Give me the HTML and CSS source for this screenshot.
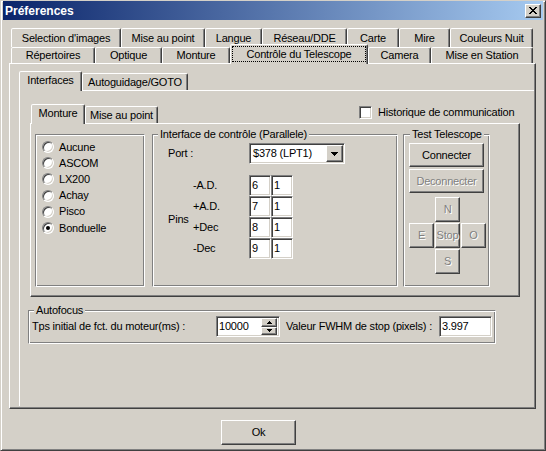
FILE: index.html
```html
<!DOCTYPE html>
<html lang="fr">
<head>
<meta charset="utf-8">
<title>Préferences</title>
<link rel="stylesheet" href="styles.css">
</head>
<body>
<div class="window">
  <div class="titlebar">
    <span class="title">Préferences</span>
    <span class="close">
      <svg width="8" height="7" viewBox="0 0 8 7" shape-rendering="crispEdges"><path fill="#000" d="M0 0h2v1h-2z M6 0h2v1h-2z M1 1h2v1h-2z M5 1h2v1h-2z M2 2h4v1h-4z M3 3h2v1h-2z M2 4h4v1h-4z M1 5h2v1h-2z M5 5h2v1h-2z M0 6h2v1h-2z M6 6h2v1h-2z"/></svg>
    </span>
  </div>
  <div class="client">
    <div class="maintabs">
      <div class="tabrow row1">
        <div class="tab">Selection d'images</div>
        <div class="tab">Mise au point</div>
        <div class="tab">Langue</div>
        <div class="tab">Réseau/DDE</div>
        <div class="tab">Carte</div>
        <div class="tab">Mire</div>
        <div class="tab">Couleurs Nuit</div>
      </div>
      <div class="tabrow row2">
        <div class="tab">Répertoires</div>
        <div class="tab">Optique</div>
        <div class="tab">Monture</div>
        <div class="tab sel"><span class="focus">Contrôle du Telescope</span></div>
        <div class="tab">Camera</div>
        <div class="tab">Mise en Station</div>
      </div>
      <div class="panel mainpanel">
        <div class="subtabs">
          <div class="tabrow subrow">
            <div class="tab sel">Interfaces</div>
            <div class="tab">Autoguidage/GOTO</div>
          </div>
          <div class="subpanel">
            <div class="montop">
              <div class="tabrow mrow">
                <div class="tab sel">Monture</div>
                <div class="tab">Mise au point</div>
              </div>
              <div class="check"><span class="checkbox"></span><span>Historique de communication</span></div>
            </div>
            <div class="panel montpanel">
              <div class="group radios">
                <div class="radio"><span class="rb"></span>Aucune</div>
                <div class="radio"><span class="rb"></span>ASCOM</div>
                <div class="radio"><span class="rb"></span>LX200</div>
                <div class="radio"><span class="rb"></span>Achay</div>
                <div class="radio"><span class="rb"></span>Pisco</div>
                <div class="radio"><span class="rb on"></span>Bonduelle</div>
              </div>
              <div class="group iface">
                <span class="caption">Interface de contrôle (Parallele)</span>
                <div class="portrow">
                  <span class="portlabel">Port :</span>
                  <div class="combo">
                    <span class="combotext">$378 (LPT1)</span>
                    <span class="btn dropbtn"><svg width="7" height="4" viewBox="0 0 7 4" shape-rendering="crispEdges"><path fill="#000" d="M0 0h7v1h-7z M1 1h5v1h-5z M2 2h3v1h-3z M3 3h1v1h-1z"/></svg></span>
                  </div>
                </div>
                <div class="pins">
                  <span class="pinslabel">Pins</span>
                  <span class="pinname">-A.D.</span><span class="edit">6</span><span class="edit">1</span>
                  <span class="pinname">+A.D.</span><span class="edit">7</span><span class="edit">1</span>
                  <span class="pinname">+Dec</span><span class="edit">8</span><span class="edit">1</span>
                  <span class="pinname">-Dec</span><span class="edit">9</span><span class="edit">1</span>
                </div>
              </div>
              <div class="group test">
                <span class="caption">Test Telescope</span>
                <div class="btn wide">Connecter</div>
                <div class="btn wide disabled">Deconnecter</div>
                <div class="pad">
                  <div class="btn disabled dn">N</div>
                  <div class="btn disabled de">E</div>
                  <div class="btn disabled dst">Stop</div>
                  <div class="btn disabled do">O</div>
                  <div class="btn disabled ds">S</div>
                </div>
              </div>
            </div>
            <div class="group autofocus">
              <span class="caption">Autofocus</span>
              <div class="afrow">
                <span class="aflabel1">Tps initial de fct. du moteur(ms) :</span>
                <div class="edit spin">
                  <span class="spintext">10000</span>
                  <span class="spinbtns">
                    <span class="btn sb"><svg width="5" height="3" viewBox="0 0 5 3" shape-rendering="crispEdges"><path fill="#000" d="M2 0h1v1h-1z M1 1h3v1h-3z M0 2h5v1h-5z"/></svg></span>
                    <span class="btn sb"><svg width="5" height="3" viewBox="0 0 5 3" shape-rendering="crispEdges"><path fill="#000" d="M0 0h5v1h-5z M1 1h3v1h-3z M2 2h1v1h-1z"/></svg></span>
                  </span>
                </div>
                <span class="aflabel2">Valeur FWHM de stop (pixels) :</span>
                <div class="edit fwhm">3.997</div>
              </div>
            </div>
          </div>
        </div>
      </div>
    </div>
    <div class="okrow"><div class="btn ok">Ok</div></div>
  </div>
</div>
</body>
</html>
```

FILE: styles.css
```css
* { box-sizing: border-box; }
html, body { margin: 0; padding: 0; }
body {
  width: 546px; height: 451px; overflow: hidden;
  background: #d4d0c8;
  font-family: "Liberation Sans", Arial, sans-serif;
  font-size: 11px; line-height: 13px; color: #000;
  letter-spacing: -0.2px;
}

.window {
  width: 546px; height: 451px;
  display: flex; flex-direction: column;
  background: #d4d0c8;
  border: 1px solid; border-color: #d4d0c8 #404040 #404040 #d4d0c8;
  box-shadow: inset 1px 1px 0 #fff, inset -1px -1px 0 #808080;
  padding: 0 2px 2px 2px;
}

.titlebar {
  flex: none; height: 19px;
  display: flex; align-items: center;
  padding: 0 2px;
  background: linear-gradient(to right, #0a246a, #a6caf0);
}
.title { flex: 1; color: #fff; font-weight: bold; font-size: 12px; letter-spacing: 0; padding-top: 1px; }
.close {
  width: 16px; height: 14px;
  display: flex; align-items: center; justify-content: center;
  padding: 0 1px 1px 0;
  background: #d4d0c8;
  border: 1px solid; border-color: #fff #404040 #404040 #fff;
  box-shadow: inset -1px -1px 0 #808080;
}
.close svg, .btn svg { display: block; }

.client { flex: 1; padding: 8px 0 0 6px; }
.maintabs { width: 527px; }

/* tabs */
.tabrow { display: flex; align-items: flex-end; }
.tab {
  flex: none;
  display: flex; align-items: center; justify-content: center;
  white-space: nowrap;
  background: #d4d0c8;
  border-style: solid; border-width: 1px 1px 0 1px;
  border-color: #fff #404040 transparent #fff;
  border-radius: 2px 2px 0 0;
  box-shadow: inset -1px 0 0 #808080;
}
.tab.sel { position: relative; z-index: 2; margin-bottom: -1px; align-items: flex-start; }

.row1 { height: 19px; padding-left: 2px; }
.row1 .tab { height: 19px; }
.row1 .tab:nth-child(1) { width: 110px; }
.row1 .tab:nth-child(2) { width: 84px; }
.row1 .tab:nth-child(3) { width: 57px; }
.row1 .tab:nth-child(4) { width: 85px; }
.row1 .tab:nth-child(5) { width: 52px; }
.row1 .tab:nth-child(6) { width: 51px; }
.row1 .tab:nth-child(7) { width: 83px; }

.row2 { height: 16px; padding-left: 2px; }
.row2 .tab { height: 16px; }
.row2 .tab.sel { height: 20px; padding-top: 1px; }
.row2 .tab:nth-child(1) { width: 84px; }
.row2 .tab:nth-child(2) { width: 67px; }
.row2 .tab:nth-child(3) { width: 68px; }
.row2 .tab:nth-child(4) { width: 138px; }
.row2 .tab:nth-child(5) { width: 63px; }
.row2 .tab:nth-child(6) { width: 102px; }

.focus {
  width: 134px; height: 16px;
  display: flex; align-items: center; justify-content: center;
  border: 1px dotted #000;
}

.panel {
  border: 1px solid; border-color: #fff #404040 #404040 #fff;
  box-shadow: inset -1px -1px 0 #808080;
}
.mainpanel { height: 346px; padding: 7px 0 0 9px; overflow: hidden; }

.subrow { height: 19px; }
.subrow .tab { height: 17px; }
.subrow .tab.sel { height: 20px; padding-top: 2px; }
.subrow .tab:nth-child(1) { width: 63px; }
.subrow .tab:nth-child(2) { width: 106px; }

.subpanel {
  width: 515px; height: 316px;
  border-top: 1px solid #fff; border-left: 1px solid #fff;
  padding: 13px 0 0 10px;
}

.montop { display: flex; width: 490px; height: 19px; }
.mrow { height: 19px; padding-left: 1px; }
.mrow .tab { height: 17px; }
.mrow .tab.sel { height: 20px; padding-top: 2px; }
.mrow .tab:nth-child(1) { width: 54px; }
.mrow .tab:nth-child(2) { width: 73px; }

.check {
  margin-left: auto; margin-right: 5px; margin-top: 2px;
  align-self: flex-start;
  width: 156px;
  display: flex; align-items: center; gap: 6px;
  white-space: nowrap;
}
.checkbox, .edit, .combo {
  background: #fff;
  border: 1px solid; border-color: #808080 #fff #fff #808080;
  box-shadow: inset 1px 1px 0 #404040, inset -1px -1px 0 #d4d0c8;
}
.checkbox { flex: none; width: 13px; height: 13px; }

.montpanel {
  width: 490px; height: 174px;
  padding: 10px 0 0 4px;
  display: flex; align-items: flex-start;
}

/* group boxes */
.group {
  position: relative;
  border: 1px solid; border-color: #808080 #fff #fff #808080;
  box-shadow: inset 1px 1px 0 #fff, inset -1px -1px 0 #808080;
}
.caption {
  position: absolute; top: -7px; left: 5px;
  padding: 0 2px;
  background: #d4d0c8;
  white-space: nowrap;
}

.radios { width: 110px; height: 153px; padding: 4px 0 0 6px; }
.radio { display: flex; align-items: center; gap: 5px; height: 16.2px; }
.rb {
  position: relative; flex: none;
  width: 12px; height: 12px; border-radius: 50%;
  background: #fff;
  border: 1px solid; border-color: #808080 #fff #fff #808080;
  box-shadow: inset 1px 1px 0 #404040, inset -1px -1px 0 #d4d0c8;
}
.rb.on::after {
  content: ""; position: absolute; left: 3px; top: 3px;
  width: 4px; height: 4px; border-radius: 50%; background: #000;
}

.iface { width: 246px; height: 153px; margin-left: 7px; padding: 8px 0 0 15px; }
.portrow { display: flex; align-items: center; height: 21px; }
.portlabel { width: 81px; }
.combo { width: 96px; height: 21px; display: flex; align-items: center; padding: 1px; }
.combotext { flex: 1; padding-left: 2px; white-space: nowrap; }
.dropbtn { width: 17px; height: 17px; flex: none; }

.pins {
  display: grid;
  grid-template-columns: 25px 56px 22px 22px;
  grid-template-rows: repeat(4, 21px);
  margin-top: 11px;
}
.pinslabel { grid-row: 1 / span 4; align-self: center; padding-top: 5px; }
.pinname { align-self: center; }
.edit { display: flex; align-items: center; padding-left: 2px; }

.test { width: 87px; height: 153px; margin-left: 5px; padding: 8px 0 0 5px; }
.test .caption { left: 6px; }

.btn {
  display: flex; align-items: center; justify-content: center;
  white-space: nowrap;
  background: #d4d0c8;
  border: 1px solid; border-color: #fff #404040 #404040 #fff;
  box-shadow: inset -1px -1px 0 #808080;
}
.disabled { color: #808080; text-shadow: 1px 1px 0 #fff; }
.wide { width: 75px; height: 24px; }
.wide + .wide { margin-top: 2px; }
.pad {
  display: grid;
  grid-template-columns: repeat(3, 25px);
  grid-template-rows: repeat(3, 25px);
  gap: 1px;
  margin-top: 4px;
}
.dn { grid-column: 2; grid-row: 1; }
.de { grid-column: 1; grid-row: 2; }
.dst { grid-column: 2; grid-row: 2; }
.do { grid-column: 3; grid-row: 2; }
.ds { grid-column: 2; grid-row: 3; }

.autofocus { width: 468px; height: 34px; margin: 13px 0 0 -2px; padding: 5px 0 0 3px; }
.afrow { display: flex; align-items: center; height: 21px; }
.aflabel1 { width: 184px; white-space: nowrap; }
.aflabel2 { width: 153px; margin-left: 6px; white-space: nowrap; }
.spin { width: 64px; height: 21px; padding: 2px; }
.spintext { flex: 1; }
.spinbtns { display: flex; flex-direction: column; width: 16px; height: 17px; }
.sb { flex: 1; }
.fwhm { width: 53px; height: 21px; }

.okrow { margin-top: 11px; }
.ok { width: 75px; height: 25px; margin-left: 212px; }
```
